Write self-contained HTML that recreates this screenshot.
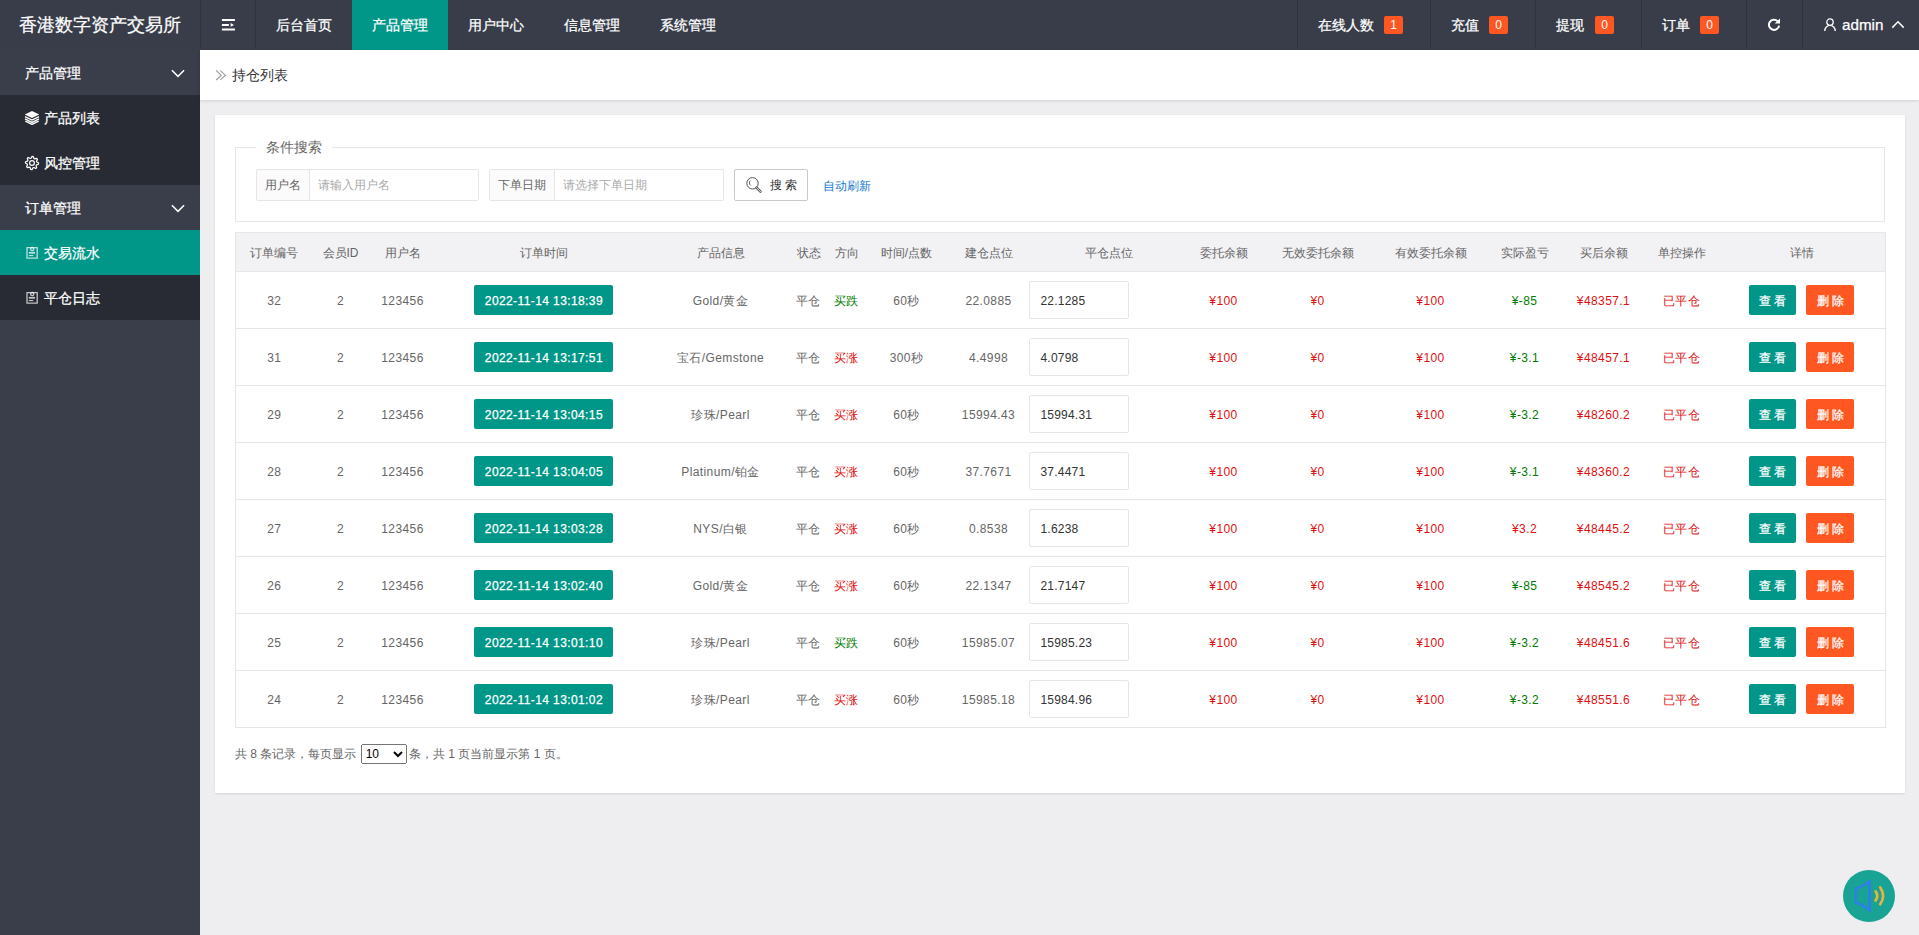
<!DOCTYPE html>
<html><head><meta charset="utf-8">
<style>
*{margin:0;padding:0;box-sizing:border-box;}
html,body{width:1919px;height:935px;overflow:hidden;}
body{font-family:"Liberation Sans",sans-serif;font-size:14px;color:#666;background:#eeedf0;position:relative;}
.abs{position:absolute;}
#hdr{left:0;top:0;width:1919px;height:50px;background:#393d49;}
.logo{left:0;top:0;width:200px;height:50px;line-height:50px;text-align:center;color:#fff;font-size:18px;}
.vsep{position:absolute;top:0;width:1px;height:49px;background:#30333c;}
.nav{top:0;height:50px;line-height:50px;color:#fff;font-size:14px;text-align:center;}
.nav.on{background:#009688;}
.badge{position:absolute;top:16px;height:18px;line-height:18px;width:19px;background:#ff5722;color:#fff;font-size:12px;text-align:center;border-radius:2px;}
#side{left:0;top:50px;width:200px;height:885px;background:#3a3d4a;}
.si{position:absolute;left:0;width:200px;height:45px;line-height:46px;color:#fff;font-size:14px;}
.si.sub{background:#282b33;}
.si.on{background:#009688;}
#body{left:200px;top:50px;width:1719px;height:885px;}
.crumb{left:200px;top:50px;width:1719px;height:50px;background:#fff;box-shadow:0 1px 3px rgba(0,0,0,.12);}
.card{left:215px;top:115px;width:1690px;height:678px;background:#fff;box-shadow:0 1px 2px rgba(0,0,0,.1),0 0 4px rgba(0,0,0,.03);}
.fs{left:235px;top:147px;width:1650px;height:75px;border:1px solid #e6e6e6;}
.legend{left:256px;top:137px;padding:0 10px;background:#fff;font-size:14px;line-height:20px;color:#666;}
.lbl{position:absolute;top:169px;height:32px;line-height:31px;border-radius:2px 0 0 2px;border:1px solid #e6e6e6;background:#fbfbfb;font-size:12px;color:#666;text-align:center;}
.inp{position:absolute;top:169px;height:32px;line-height:31px;border-radius:0 2px 2px 0;border:1px solid #e6e6e6;border-left:none;background:#fff;font-size:12px;color:#aaa;padding-left:8px;}
table{position:absolute;left:235px;top:232px;border-collapse:collapse;table-layout:fixed;width:1650px;font-size:12px;}
th{height:39px;padding-top:2px;background:#f2f1f4;font-weight:normal;color:#666;text-align:center;white-space:nowrap;border-top:1px solid #e6e6e6;border-bottom:1px solid #e6e6e6;}
td{height:57px;padding-top:2px;letter-spacing:0.4px;text-align:center;color:#666;white-space:nowrap;border-bottom:1px solid #e6e6e6;}
th:first-child,td:first-child{border-left:1px solid #e6e6e6;}
th:last-child,td:last-child{border-right:1px solid #e6e6e6;}
.tbtn{display:inline-block;position:relative;top:-1px;height:30px;line-height:30px;padding:0 10px;background:#009688;color:#fff;border-radius:2px;font-size:12px;}
.del{background:#ff5722;margin-left:10px;}
.dt{letter-spacing:0.4px;padding:2px 9.6px 0 10.4px;line-height:28px;}
.vw{letter-spacing:0;width:47px;padding:2px 0 0 0;line-height:28px;text-align:center;}
.del{width:48px;}
.pin{letter-spacing:0.2px;display:block;position:relative;top:-1px;width:100px;height:38px;line-height:38px;border:1px solid #e6e6e6;border-radius:2px;text-align:left;padding-left:11px;color:#333;margin-left:-2px;}
.red{color:#e01010;}
.green{color:#007a00;}
.pg{left:235px;top:744px;font-size:12px;color:#666;line-height:16px;}
.nav,.si,.tbtn,.logo{-webkit-text-stroke:0.25px #fff;}
</style></head><body>
<div id="hdr" class="abs">
  <div class="abs logo">香港数字资产交易所</div>
  <div class="vsep" style="left:200px"></div>
  <div class="vsep" style="left:255px"></div>
  <svg class="abs" style="left:221px;top:19px" width="14" height="12" viewBox="0 0 14 12"><rect x="0.9" y="0" width="13" height="2" fill="#fff"/><rect x="0.9" y="5" width="7" height="2" fill="#fff"/><path d="M9.6 4 L13 6 L9.6 7.8Z" fill="#fff"/><rect x="0.9" y="9.5" width="13" height="2" fill="#fff"/></svg>
  <div class="abs nav" style="left:256px;width:96px">后台首页</div>
  <div class="abs nav on" style="left:352px;width:96px">产品管理</div>
  <div class="abs nav" style="left:448px;width:96px">用户中心</div>
  <div class="abs nav" style="left:544px;width:96px">信息管理</div>
  <div class="abs nav" style="left:640px;width:96px">系统管理</div>
  <div class="vsep" style="left:1297px"></div>
  <div class="vsep" style="left:1430px"></div>
  <div class="vsep" style="left:1535px"></div>
  <div class="vsep" style="left:1641px"></div>
  <div class="vsep" style="left:1746px"></div>
  <div class="vsep" style="left:1802px"></div>
  <div class="abs nav" style="left:1318px">在线人数</div><div class="badge" style="left:1384px">1</div>
  <div class="abs nav" style="left:1451px">充值</div><div class="badge" style="left:1489px">0</div>
  <div class="abs nav" style="left:1556px">提现</div><div class="badge" style="left:1595px">0</div>
  <div class="abs nav" style="left:1662px">订单</div><div class="badge" style="left:1700px">0</div>
  <svg class="abs" style="left:1766px;top:17px" width="16" height="16" viewBox="0 0 16 16"><path d="M13.1 8.6 A5.1 5.1 0 1 1 11.6 4.1" fill="none" stroke="#fff" stroke-width="2"/><path d="M8.7 6.4 L14 6.4 L14 1.5Z" fill="#fff"/></svg>
  <svg class="abs" style="left:1823px;top:17px" width="14" height="16" viewBox="0 0 14 16"><circle cx="7" cy="5.1" r="3.2" fill="none" stroke="#fff" stroke-width="1.3"/><path d="M1.8 14 A5.2 5.6 0 0 1 12.2 14" fill="none" stroke="#fff" stroke-width="1.3"/></svg>
  <div class="abs nav" style="left:1842px;font-size:15.2px">admin</div>
  <svg class="abs" style="left:1890px;top:19px" width="16" height="11" viewBox="0 0 16 11"><path d="M2.3 8.6 L8 2.8 L13.7 8.6" fill="none" stroke="#fff" stroke-width="1.5"/></svg>
</div>
<div id="side" class="abs">
  <div class="si" style="top:0"><span class="abs" style="left:25px">产品管理</span><svg class="abs" style="left:170px;top:18px" width="16" height="12" viewBox="0 0 16 12"><path d="M1.9 2.2 L8 8.4 L14.1 2.2" fill="none" stroke="#fff" stroke-width="1.5"/></svg></div>
  <div class="si sub" style="top:45px"><svg class="abs" style="left:24px;top:15px" width="16" height="15" viewBox="0 0 16 15"><path d="M8 0.9 L15.2 4.4 L8 7.9 L0.8 4.4Z" fill="#fff"/><path d="M1 6.6 L8 10.1 L15 6.6 M1 8.9 L8 12.4 L15 8.9 M1.3 11.1 L8 14.4 L14.7 11.1" fill="none" stroke="#fff" stroke-width="1.3"/></svg><span class="abs" style="left:44px">产品列表</span></div>
  <div class="si sub" style="top:90px"><svg class="abs" style="left:24px;top:14.5px" width="16" height="16" viewBox="0 0 16 16"><path d="M7.04 3.19 L8.00 1.40 L9.29 1.53 L9.88 3.47 L10.72 3.93 L12.67 3.33 L13.49 4.33 L12.53 6.12 L12.81 7.04 L14.60 8.00 L14.47 9.29 L12.53 9.88 L12.07 10.72 L12.67 12.67 L11.67 13.49 L9.88 12.53 L8.96 12.81 L8.00 14.60 L6.71 14.47 L6.12 12.53 L5.28 12.07 L3.33 12.67 L2.51 11.67 L3.47 9.88 L3.19 8.96 L1.40 8.00 L1.53 6.71 L3.47 6.12 L3.93 5.28 L3.33 3.33 L4.33 2.51 L6.12 3.47Z" fill="none" stroke="#fff" stroke-width="1.2" stroke-linejoin="round"/><circle cx="8" cy="8" r="2.4" fill="none" stroke="#fff" stroke-width="1.2"/></svg><span class="abs" style="left:44px">风控管理</span></div>
  <div class="si" style="top:135px"><span class="abs" style="left:25px">订单管理</span><svg class="abs" style="left:170px;top:18px" width="16" height="12" viewBox="0 0 16 12"><path d="M1.9 2.2 L8 8.4 L14.1 2.2" fill="none" stroke="#fff" stroke-width="1.5"/></svg></div>
  <div class="si on" style="top:180px"><svg class="abs" style="left:25px;top:15px" width="15" height="15" viewBox="0 0 15 15"><path d="M2 2.7 H12.2 V13.2 H2 Z" fill="none" stroke="rgba(255,255,255,0.72)" stroke-width="1.3"/><circle cx="7.2" cy="4.1" r="1.6" fill="none" stroke="rgba(255,255,255,0.72)" stroke-width="1.3"/><rect x="3.8" y="6.9" width="6.2" height="1.8" fill="rgba(255,255,255,0.72)"/><rect x="3.8" y="10" width="4.4" height="1.1" fill="rgba(255,255,255,0.72)"/></svg><span class="abs" style="left:44px">交易流水</span></div>
  <div class="si sub" style="top:225px"><svg class="abs" style="left:25px;top:15px" width="15" height="15" viewBox="0 0 15 15"><path d="M2 2.7 H12.2 V13.2 H2 Z" fill="none" stroke="rgba(255,255,255,0.72)" stroke-width="1.3"/><circle cx="7.2" cy="4.1" r="1.6" fill="none" stroke="rgba(255,255,255,0.72)" stroke-width="1.3"/><rect x="3.8" y="6.9" width="6.2" height="1.8" fill="rgba(255,255,255,0.72)"/><rect x="3.8" y="10" width="4.4" height="1.1" fill="rgba(255,255,255,0.72)"/></svg><span class="abs" style="left:44px">平仓日志</span></div>
</div>
<div class="abs crumb"><svg class="abs" style="left:15px;top:20px" width="12" height="11" viewBox="0 0 12 11"><path d="M1.1 0.4 L6.2 5.4 L1.1 10 M5.4 0.7 L10.5 5.4 L5.4 9.7" fill="none" stroke="#999" stroke-width="1.1"/></svg><span class="abs" style="left:32px;top:16px;line-height:18px;color:#333">持仓列表</span></div>
<div class="abs card"></div>
<div class="abs fs"></div>
<div class="abs legend">条件搜索</div>
<div class="lbl" style="left:256px;width:54px">用户名</div>
<div class="inp" style="left:310px;width:169px">请输入用户名</div>
<div class="lbl" style="left:489px;width:66px">下单日期</div>
<div class="inp" style="left:555px;width:169px">请选择下单日期</div>
<div class="abs" style="left:734px;top:169px;width:74px;height:32px;border:1px solid #c9c9c9;border-radius:2px;background:#fff;font-size:12px;line-height:31px;color:#333;padding-left:35px">搜 索<svg class="abs" style="left:11px;top:7px" width="18" height="18" viewBox="0 0 18 18"><circle cx="6.5" cy="6.3" r="5.7" fill="none" stroke="#555" stroke-width="1"/><path d="M4.6 3.6 A3 3 0 0 0 4.6 8.4" fill="none" stroke="#555" stroke-width="0.9"/><path d="M10.6 10.6 L14.5 14.7" stroke="#555" stroke-width="2.4" stroke-linecap="round"/><path d="M10.6 10.6 L14.5 14.7" stroke="#fff" stroke-width="0.8" stroke-linecap="round"/></svg></div>
<div class="abs" style="left:823px;top:178px;font-size:12px;line-height:16px;color:#1a7bd2">自动刷新</div>
<table id="tb">
<colgroup>
<col style="width:77px"><col style="width:56px"><col style="width:68px"><col style="width:214px"><col style="width:140px"><col style="width:36px"><col style="width:40px"><col style="width:80px"><col style="width:84px"><col style="width:156px"><col style="width:74px"><col style="width:114px"><col style="width:112px"><col style="width:76px"><col style="width:82px"><col style="width:74px"><col style="width:167px">
</colgroup>
<thead><tr><th>订单编号</th><th>会员ID</th><th>用户名</th><th>订单时间</th><th>产品信息</th><th>状态</th><th>方向</th><th>时间/点数</th><th>建仓点位</th><th>平仓点位</th><th>委托余额</th><th>无效委托余额</th><th>有效委托余额</th><th>实际盈亏</th><th>买后余额</th><th>单控操作</th><th>详情</th></tr></thead>
<tbody>
<tr><td>32</td><td>2</td><td>123456</td><td><span class="tbtn dt">2022-11-14 13:18:39</span></td><td>Gold/黄金</td><td>平仓</td><td class="green">买跌</td><td>60秒</td><td>22.0885</td><td><span class="pin">22.1285</span></td><td class="red">¥100</td><td class="red">¥0</td><td class="red">¥100</td><td class="green">¥-85</td><td class="red">¥48357.1</td><td class="red">已平仓</td><td><span class="tbtn vw">查 看</span><span class="tbtn vw del">删 除</span></td></tr>
<tr><td>31</td><td>2</td><td>123456</td><td><span class="tbtn dt">2022-11-14 13:17:51</span></td><td>宝石/Gemstone</td><td>平仓</td><td class="red">买涨</td><td>300秒</td><td>4.4998</td><td><span class="pin">4.0798</span></td><td class="red">¥100</td><td class="red">¥0</td><td class="red">¥100</td><td class="green">¥-3.1</td><td class="red">¥48457.1</td><td class="red">已平仓</td><td><span class="tbtn vw">查 看</span><span class="tbtn vw del">删 除</span></td></tr>
<tr><td>29</td><td>2</td><td>123456</td><td><span class="tbtn dt">2022-11-14 13:04:15</span></td><td>珍珠/Pearl</td><td>平仓</td><td class="red">买涨</td><td>60秒</td><td>15994.43</td><td><span class="pin">15994.31</span></td><td class="red">¥100</td><td class="red">¥0</td><td class="red">¥100</td><td class="green">¥-3.2</td><td class="red">¥48260.2</td><td class="red">已平仓</td><td><span class="tbtn vw">查 看</span><span class="tbtn vw del">删 除</span></td></tr>
<tr><td>28</td><td>2</td><td>123456</td><td><span class="tbtn dt">2022-11-14 13:04:05</span></td><td>Platinum/铂金</td><td>平仓</td><td class="red">买涨</td><td>60秒</td><td>37.7671</td><td><span class="pin">37.4471</span></td><td class="red">¥100</td><td class="red">¥0</td><td class="red">¥100</td><td class="green">¥-3.1</td><td class="red">¥48360.2</td><td class="red">已平仓</td><td><span class="tbtn vw">查 看</span><span class="tbtn vw del">删 除</span></td></tr>
<tr><td>27</td><td>2</td><td>123456</td><td><span class="tbtn dt">2022-11-14 13:03:28</span></td><td>NYS/白银</td><td>平仓</td><td class="red">买涨</td><td>60秒</td><td>0.8538</td><td><span class="pin">1.6238</span></td><td class="red">¥100</td><td class="red">¥0</td><td class="red">¥100</td><td class="red">¥3.2</td><td class="red">¥48445.2</td><td class="red">已平仓</td><td><span class="tbtn vw">查 看</span><span class="tbtn vw del">删 除</span></td></tr>
<tr><td>26</td><td>2</td><td>123456</td><td><span class="tbtn dt">2022-11-14 13:02:40</span></td><td>Gold/黄金</td><td>平仓</td><td class="red">买涨</td><td>60秒</td><td>22.1347</td><td><span class="pin">21.7147</span></td><td class="red">¥100</td><td class="red">¥0</td><td class="red">¥100</td><td class="green">¥-85</td><td class="red">¥48545.2</td><td class="red">已平仓</td><td><span class="tbtn vw">查 看</span><span class="tbtn vw del">删 除</span></td></tr>
<tr><td>25</td><td>2</td><td>123456</td><td><span class="tbtn dt">2022-11-14 13:01:10</span></td><td>珍珠/Pearl</td><td>平仓</td><td class="green">买跌</td><td>60秒</td><td>15985.07</td><td><span class="pin">15985.23</span></td><td class="red">¥100</td><td class="red">¥0</td><td class="red">¥100</td><td class="green">¥-3.2</td><td class="red">¥48451.6</td><td class="red">已平仓</td><td><span class="tbtn vw">查 看</span><span class="tbtn vw del">删 除</span></td></tr>
<tr><td>24</td><td>2</td><td>123456</td><td><span class="tbtn dt">2022-11-14 13:01:02</span></td><td>珍珠/Pearl</td><td>平仓</td><td class="red">买涨</td><td>60秒</td><td>15985.18</td><td><span class="pin">15984.96</span></td><td class="red">¥100</td><td class="red">¥0</td><td class="red">¥100</td><td class="green">¥-3.2</td><td class="red">¥48551.6</td><td class="red">已平仓</td><td><span class="tbtn vw">查 看</span><span class="tbtn vw del">删 除</span></td></tr>
</tbody>
</table>
<div class="abs pg">共 8 条记录，每页显示 <select style="font-size:12px;width:46px;height:20px;position:relative;left:1px;top:-0.5px"><option>10</option></select> 条，共 1 页当前显示第 1 页。</div>
<div class="abs" style="left:1843px;top:870px;width:52px;height:52px;border-radius:50%;background:#19a394"><svg class="abs" style="left:0;top:0" width="52" height="52" viewBox="0 0 52 52"><path d="M26.6 11.2 C21.5 14.8 17.5 17.6 12.8 18.6 V32.6 C17.5 33.8 21.5 36.5 26.6 40.6 Z" fill="none" stroke="#2e7fe6" stroke-width="2.6" stroke-linejoin="round"/><path d="M32.6 21.3 Q36 26 32.6 30.6" fill="none" stroke="#f0b33a" stroke-width="2.6" stroke-linecap="round"/><path d="M37.2 17.3 Q43 26 37.2 34.3" fill="none" stroke="#f0b33a" stroke-width="2.6" stroke-linecap="round"/></svg></div>
</body></html>
